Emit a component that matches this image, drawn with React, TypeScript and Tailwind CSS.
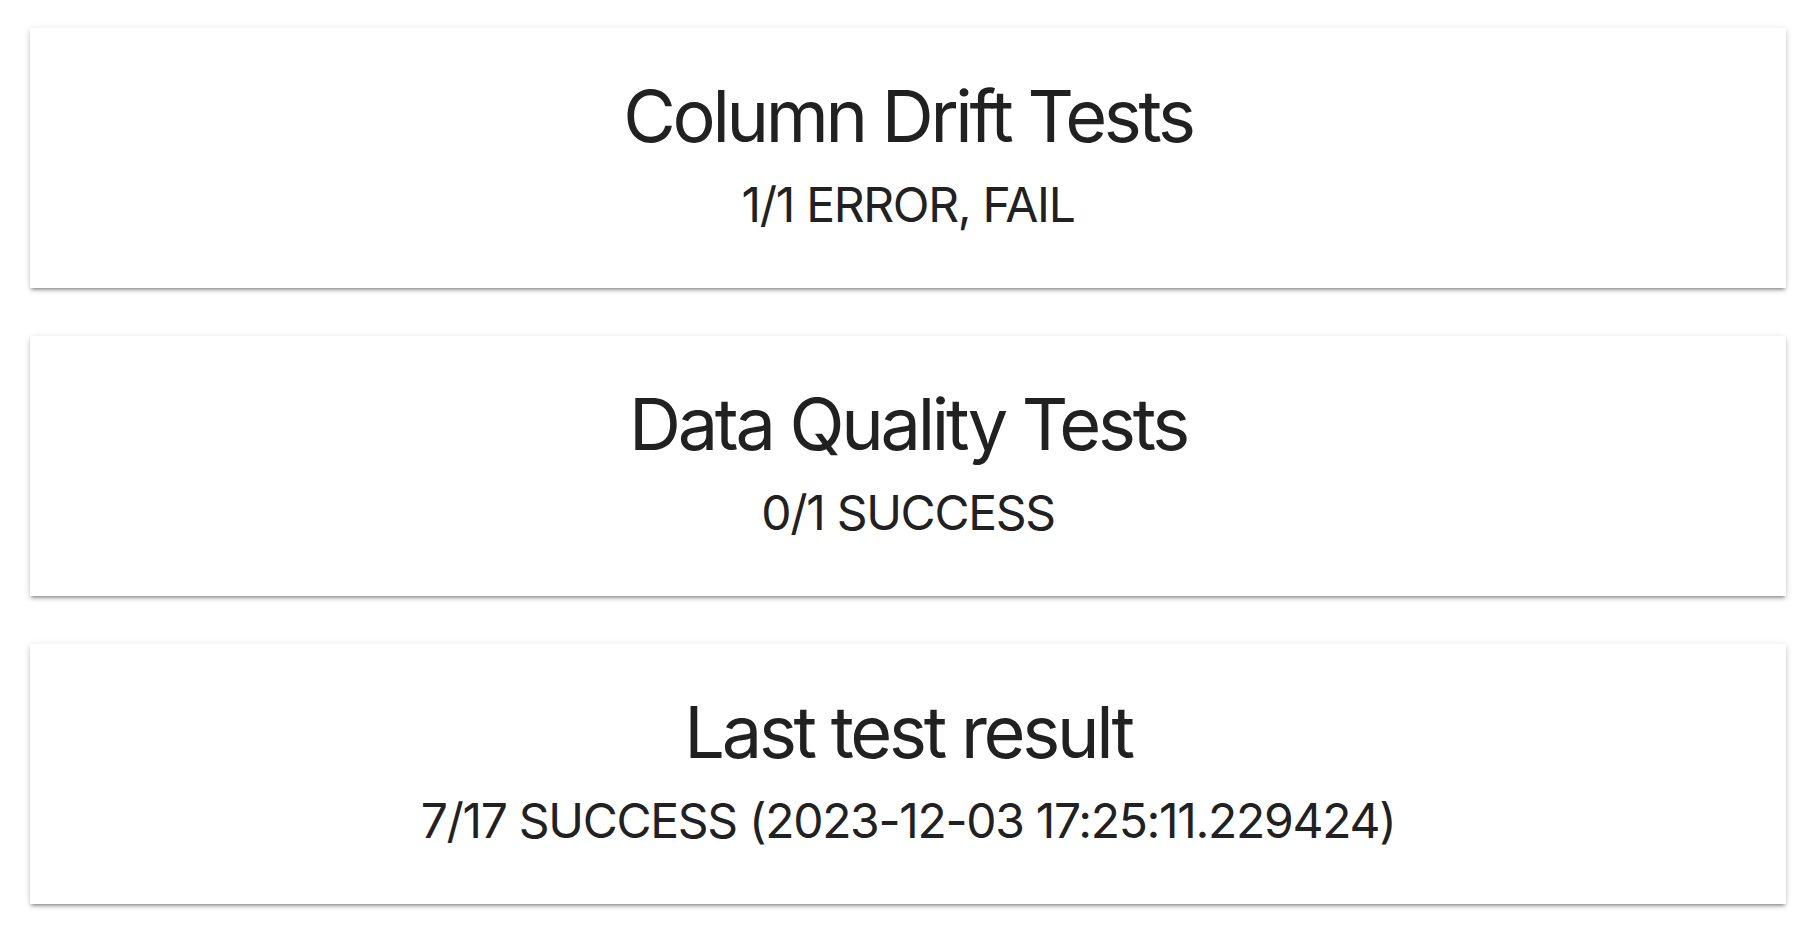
const cards = [
  { title: 'Column Drift Tests', value: '1/1 ERROR, FAIL' },
  { title: 'Data Quality Tests', value: '0/1 SUCCESS' },
  { title: 'Last test result', value: '7/17 SUCCESS (2023-12-03 17:25:11.229424)' },
];

function StatCard({ title, value }: { title: string; value: string }) {
  return (
    <div className="flex h-[260px] flex-col items-center bg-white pt-[52px] text-[#212121] shadow-[0px_3px_3px_-2px_rgba(0,0,0,0.35),0px_3px_4px_0px_rgba(0,0,0,0.14),0px_1px_8px_0px_rgba(0,0,0,0.1)]">
      <h3 className="text-[72px] leading-[72px] font-normal tracking-[-3.3px]">{title}</h3>
      <p className="mt-[29px] text-[48px] leading-[48px] tracking-[-1.3px]">{value}</p>
    </div>
  );
}

export default function App() {
  return (
    <div className="min-h-screen bg-white pt-[28px] pl-[30px] pr-[14px] font-['Inter','Liberation_Sans',sans-serif]">
      <div className="flex flex-col gap-[48px]">
        {cards.map((c) => (
          <StatCard key={c.title} title={c.title} value={c.value} />
        ))}
      </div>
    </div>
  );
}
